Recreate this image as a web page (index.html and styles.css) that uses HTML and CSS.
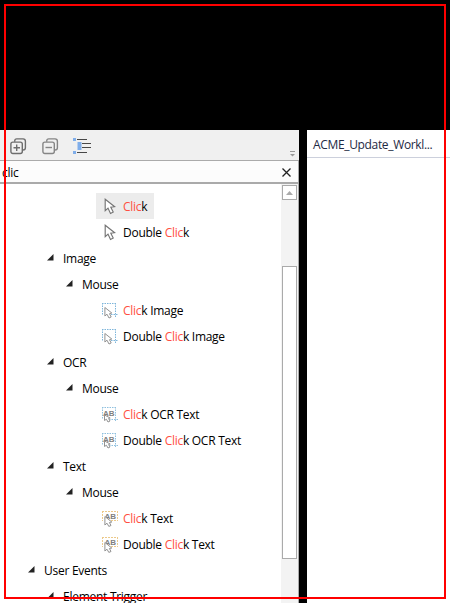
FILE: index.html
```html
<!DOCTYPE html>
<html lang="en">
<head>
<meta charset="utf-8">
<title>Activities</title>
<link rel="stylesheet" href="styles.css">
</head>
<body>
<svg width="0" height="0" class="defs">
  <defs>
    <symbol id="cursor" viewBox="0 0 12 17"><path d="M1.2 1.2V12.6L4 10.1L6.5 15.4L9.2 14.1L6.8 9.2L10.7 8.7Z" fill="#fff" stroke="#747474" stroke-width="1.15"/></symbol>
    <symbol id="image" viewBox="0 0 16 16"><path d="M0 .5H14M.5 0V12M13.5 0V15M9 11.5H16" fill="none" stroke="#7db5da" stroke-dasharray="1.5 1"/><path d="M2.9 4.5V13L5 11.2L7 15L9.2 14L7.5 10.7L9.8 10Z" fill="#fff" stroke="#929292"/></symbol>
    <symbol id="ocr" viewBox="0 0 16 16"><path d="M0 .5H14M.5 0V12M13.5 0V15M7 12.5H16" fill="none" stroke="#8fc0df" stroke-dasharray="1.5 1"/><text x="1" y="8.5" class="ab">AB</text><path d="M2.5 8V13.5L4.4 12.2L6 15L8 14L6.6 11.5L8.2 11Z" fill="#fff" stroke="#929292"/></symbol>
    <symbol id="text" viewBox="0 0 16 16"><path d="M0 .5H16M6 9.5H16M.5 0V10M15.5 0V10" fill="none" stroke="#ecc98a" stroke-dasharray="2 1"/><text x="2.5" y="7.8" class="ab">AB</text><path d="M2.9 5.5V14L5 12.2L6.8 15.4L9 14.5L7.4 11.5L9.8 11Z" fill="#fff" stroke="#929292"/></symbol>
    <symbol id="arrow" viewBox="0 0 7 7"><path d="M6.5 0V6.5H0Z" fill="#222"/></symbol>
  </defs>
</svg>
<div class="app">
  <section class="panel">
    <div class="toolbar">
      <svg class="tool" width="17" height="17" viewBox="0 0 17 17"><g fill="none" stroke="#6d6d6d" stroke-width="1.4"><path d="M4.7 3.8V3Q4.7 .9 6.8 .9H13Q15.4 .9 15.4 3.2V9.7Q15.4 12 13 12H12.5"/><rect x=".9" y="4.1" width="11.4" height="11.4" rx="2"/><path d="M3.5 9.7H10M6.7 6.5V13"/></g></svg>
      <svg class="tool" width="17" height="17" viewBox="0 0 17 17"><g fill="none" stroke="#858585" stroke-width="1.4"><path d="M4.7 3.8V3Q4.7 .9 6.8 .9H13Q15.4 .9 15.4 3.2V9.7Q15.4 12 13 12H12.5"/><rect x=".9" y="4.1" width="11.4" height="11.4" rx="2"/><path d="M3.5 9.5H10"/></g></svg>
      <svg class="tool list" width="18" height="17" viewBox="0 0 18 17"><path d="M0 0H3V3H0ZM4.5 4H8.5V12H4.5ZM0 13H3V16H0Z" fill="#80aeea"/><path d="M4 1.5H14M9 5.5H18M9 9.5H18M4 14.5H14" stroke="#484848" stroke-width="1.2"/></svg>
      <svg class="overflow" width="5" height="6" viewBox="0 0 5 6"><path d="M0 .5H5" stroke="#999"/><path d="M0 3H5L2.5 5.5Z" fill="#999"/></svg>
    </div>
    <div class="search"><span>clic</span><svg width="9" height="9" viewBox="0 0 9 9"><path d="M.5 .5L8.5 8.5M8.5 .5L.5 8.5" stroke="#222" stroke-width="1.3"/></svg></div>
    <div class="body">
      <div class="tree">
        <div class="leaf selected"><svg class="cur"><use href="#cursor"/></svg><span><b>Clic</b>k</span></div>
        <div class="leaf"><svg class="cur"><use href="#cursor"/></svg><span>Double <b>Clic</b>k</span></div>
        <div class="group l2"><svg><use href="#arrow"/></svg><span>Image</span></div>
        <div class="group l3"><svg><use href="#arrow"/></svg><span>Mouse</span></div>
        <div class="leaf"><svg><use href="#image"/></svg><span><b>Clic</b>k Image</span></div>
        <div class="leaf"><svg><use href="#image"/></svg><span>Double <b>Clic</b>k Image</span></div>
        <div class="group l2"><svg><use href="#arrow"/></svg><span>OCR</span></div>
        <div class="group l3"><svg><use href="#arrow"/></svg><span>Mouse</span></div>
        <div class="leaf"><svg><use href="#ocr"/></svg><span><b>Clic</b>k OCR Text</span></div>
        <div class="leaf"><svg><use href="#ocr"/></svg><span>Double <b>Clic</b>k OCR Text</span></div>
        <div class="group l2"><svg><use href="#arrow"/></svg><span>Text</span></div>
        <div class="group l3"><svg><use href="#arrow"/></svg><span>Mouse</span></div>
        <div class="leaf"><svg><use href="#text"/></svg><span><b>Clic</b>k Text</span></div>
        <div class="leaf"><svg><use href="#text"/></svg><span>Double <b>Clic</b>k Text</span></div>
        <div class="group l1"><svg><use href="#arrow"/></svg><span>User Events</span></div>
        <div class="group l2"><svg><use href="#arrow"/></svg><span>Element Trigger</span></div>
      </div>
      <div class="scrollbar">
        <div class="up"><svg width="7" height="4" viewBox="0 0 7 4"><path d="M0 4L3.5 0L7 4Z" fill="#aaa"/></svg></div>
        <div class="thumb"></div>
      </div>
    </div>
  </section>
  <section class="document"><div class="tab">ACME_Update_Workl...</div></section>
</div>
<div class="frame"></div>
</body>
</html>
```

FILE: styles.css
```css
* { box-sizing: border-box; }
body {
  margin: 0;
  width: 450px;
  height: 603px;
  overflow: hidden;
  background: #000;
  color: #000;
  font: 12px/16px "Open Sans", "Noto Sans", sans-serif;
  letter-spacing: -0.27px;
}
svg { display: block; flex: none; }
.defs { position: absolute; }
.app { display: flex; gap: 8px; height: 603px; padding-top: 130px; }
.panel { display: flex; flex-direction: column; width: 299px; }
.toolbar {
  display: flex;
  align-items: flex-start;
  gap: 15px;
  height: 30px;
  padding: 8px 4px 0 10px;
  background: #f0f0f0;
}
.list { margin-left: -1px; }
.overflow { margin: 13px 0 0 auto; }
.search {
  display: flex;
  align-items: center;
  justify-content: space-between;
  height: 24px;
  padding: 1px 7px 0 2px;
  border: solid #aaa;
  border-width: 1px 1px 2px 0;
  background: #fcfcfc;
}
.search span { padding-top: 1px; }
.body { display: flex; flex: 1; min-height: 0; border-right: 1px solid #aaa; background: #fff; }
.tree { flex: 1; padding-top: 9px; overflow: hidden; white-space: nowrap; }
.tree b { font-weight: 400; color: #ff4f43; }
.leaf, .group { display: flex; align-items: center; height: 26px; padding-top: 2px; }
.leaf { width: max-content; margin-left: 96px; padding-left: 6px; }
.leaf svg { width: 16px; height: 16px; margin-right: 5px; }
.leaf .cur { width: 12px; height: 17px; margin: -1px 7px 0 2px; }
.selected { width: 58px; background: #ececec; }
.group svg { width: 7px; height: 7px; margin: -4px 9px 0 0; }
.l1 { padding-left: 28px; }
.l2 { padding-left: 47px; }
.l3 { padding-left: 66px; }
.ab { font: bold 8px "Liberation Sans", sans-serif; letter-spacing: 0; fill: #808080; }
.scrollbar { width: 17px; padding: 1px 1px 0; background: #f3f3f3; }
.up { display: flex; align-items: center; justify-content: center; height: 15px; border: 1px solid #aaa; background: #fff; }
.thumb { height: 293px; margin-top: 66px; border: 1px solid #aaa; background: #fff; }
.document { flex: 1; background: #fff; }
.tab { height: 28px; padding: 7px 0 0 6px; border-bottom: 1px solid #ccd0dc; color: #1e2a44; letter-spacing: -0.34px; white-space: nowrap; }
.frame { position: absolute; left: 4px; top: 4px; width: 442px; height: 595px; border: 2px solid #f00; pointer-events: none; }
```
